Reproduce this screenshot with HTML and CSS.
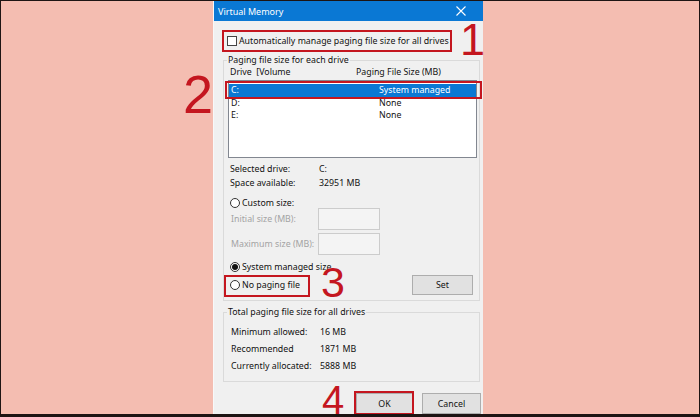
FILE: index.html
```html
<!DOCTYPE html>
<html>
<head>
<meta charset="utf-8">
<link rel="stylesheet" href="styles.css">
</head>
<body>
<div class="frame">
  <div class="dialog">
    <div class="titlebar">
      <span class="title">Virtual Memory</span>
      <svg class="close" width="10" height="10" viewBox="0 0 10 10"><path d="M0.5 0.5 L9.5 9.5 M9.5 0.5 L0.5 9.5" stroke="#fff" stroke-width="1.1" fill="none"/></svg>
    </div>
    <div class="auto-row">
      <span class="checkbox"></span>
      <span>Automatically manage paging file size for all drives</span>
    </div>
    <div class="group group1">
      <div class="legend">Paging file size for each drive</div>
      <div class="list-head">
        <span class="col1">Drive&nbsp; [Volume</span>
        <span>Paging File Size (MB)</span>
      </div>
      <div class="list">
        <div class="list-row selected"><span class="lcol1">C:</span><span>System managed</span></div>
        <div class="list-row"><span class="lcol1">D:</span><span>None</span></div>
        <div class="list-row"><span class="lcol1">E:</span><span>None</span></div>
      </div>
      <div class="info">
        <div class="info-row"><span class="ilabel">Selected drive:</span><span>C:</span></div>
        <div class="info-row"><span class="ilabel">Space available:</span><span>32951 MB</span></div>
      </div>
      <div class="radio-row custom"><span class="radio"></span><span>Custom size:</span></div>
      <div class="field-row first"><span class="flabel">Initial size (MB):</span><span class="input"></span></div>
      <div class="field-row"><span class="flabel">Maximum size (MB):</span><span class="input"></span></div>
      <div class="radio-row sysman"><span class="radio checked"></span><span>System managed size</span></div>
      <div class="radio-row nopage">
        <span class="radio"></span><span>No paging file</span>
        <span class="btn set">Set</span>
      </div>
    </div>
    <div class="group group2">
      <div class="legend">Total paging file size for all drives</div>
      <div class="totals">
        <div class="total-row"><span class="tlabel">Minimum allowed:</span><span>16 MB</span></div>
        <div class="total-row"><span class="tlabel">Recommended</span><span>1871 MB</span></div>
        <div class="total-row"><span class="tlabel">Currently allocated:</span><span>5888 MB</span></div>
      </div>
    </div>
    <div class="buttons">
      <span class="btn ok">OK</span>
      <span class="btn cancel">Cancel</span>
    </div>
  </div>

  <div class="mark box-auto"></div>
  <div class="mark box-c"></div>
  <div class="mark box-nopage"></div>
  <div class="mark box-ok"></div>
  <span class="num n1">1</span>
  <span class="num n2">2</span>
  <span class="num n3">3</span>
  <span class="num n4">4</span>
</div>
</body>
</html>
```

FILE: styles.css
```css
html, body {
  margin: 0;
  padding: 0;
}
body {
  background: #1d1413;
  width: 700px;
  height: 417px;
  overflow: hidden;
  font-family: "Noto Sans", "Open Sans", sans-serif;
  font-size: 8.8px;
  color: #111;
}
.frame {
  position: relative;
  margin: 1px 1px 3px 1px;
  height: 413px;
  background: #f4bdb1;
  display: flex;
  padding-left: 212px;
  overflow: hidden;
}
.dialog {
  width: 270px;
  height: 413px;
  background: #f0f0f0;
  display: flex;
  flex-direction: column;
  border-left: 1px solid #f8f8f8;
  box-sizing: border-box;
}
.titlebar {
  height: 20px;
  flex: none;
  background: #0a78d4;
  color: #fff;
  display: flex;
  align-items: center;
  justify-content: space-between;
  padding: 0 17px 0 4px;
  font-size: 9px;
}
.close {
  display: block;
}
.auto-row {
  margin-top: 13px;
  height: 14px;
  padding-left: 13px;
  display: flex;
  align-items: center;
  gap: 2px;
  white-space: nowrap;
}
.checkbox {
  width: 8px;
  height: 8px;
  border: 1px solid #444;
  background: #fff;
  flex: none;
}
.group {
  margin-left: 9px;
  width: 257px;
  border: 1px solid #dadada;
  box-sizing: border-box;
}
.group1 {
  margin-top: 12px;
  padding-bottom: 5px;
}
.legend {
  margin-top: -7px;
  margin-left: 3px;
  padding: 0 1px;
  width: fit-content;
  background: #f0f0f0;
  line-height: 12px;
  height: 12px;
  white-space: nowrap;
}
.list-head {
  height: 12px;
  line-height: 12px;
  padding-left: 6px;
  display: flex;
  white-space: nowrap;
}
.col1 {
  width: 126px;
}
.list {
  margin-top: 2px;
  margin-left: 4px;
  width: 249px;
  height: 78px;
  border: 1px solid #828790;
  background: #fff;
  box-sizing: border-box;
  padding-top: 3px;
}
.list-row {
  height: 12.5px;
  line-height: 12.5px;
  padding-left: 2px;
  display: flex;
  white-space: nowrap;
}
.list-row.selected {
  background: #0a78d4;
  color: #fff;
}
.lcol1 {
  width: 148px;
}
.info {
  margin-top: 4px;
  padding-left: 6px;
}
.info-row {
  height: 14px;
  line-height: 14px;
  display: flex;
  white-space: nowrap;
}
.ilabel {
  width: 89px;
}
.radio-row {
  display: flex;
  align-items: center;
  gap: 2px;
  padding-left: 6px;
  white-space: nowrap;
}
.radio {
  width: 8px;
  height: 8px;
  border: 1px solid #333;
  border-radius: 50%;
  background: #fff;
  flex: none;
  display: flex;
  align-items: center;
  justify-content: center;
}
.radio.checked::after {
  content: "";
  width: 6px;
  height: 6px;
  border-radius: 50%;
  background: #111;
}
.custom {
  margin-top: 8px;
  height: 10px;
}
.field-row {
  height: 22px;
  display: flex;
  align-items: center;
  padding-left: 7px;
  color: #a3a3a3;
  white-space: nowrap;
  margin-top: 3px;
}
.field-row.first {
  margin-top: 0;
}
.flabel {
  width: 87px;
}
.input {
  width: 62px;
  height: 22px;
  border: 1px solid #cccccc;
  background: #f4f4f4;
  box-sizing: border-box;
}
.sysman {
  margin-top: 6px;
  height: 12px;
}
.nopage {
  margin-top: 2px;
  height: 20px;
  padding-right: 6px;
}
.btn {
  display: flex;
  align-items: center;
  justify-content: center;
  background: #e1e1e1;
  border: 1px solid #adadad;
  box-sizing: border-box;
  color: #111;
}
.set {
  margin-left: auto;
  width: 61px;
  height: 20px;
}
.group2 {
  margin-top: 11px;
  padding-bottom: 6px;
}
.totals {
  margin-top: 6px;
  padding-left: 7px;
}
.total-row {
  height: 17px;
  line-height: 17px;
  display: flex;
  white-space: nowrap;
}
.tlabel {
  width: 89px;
}
.buttons {
  margin-top: 11px;
  height: 21px;
  display: flex;
  justify-content: flex-end;
  gap: 9px;
  padding-right: 2px;
}
.ok {
  width: 57px;
  height: 21px;
}
.cancel {
  width: 59px;
  height: 21px;
}
.mark {
  position: absolute;
  border: 2px solid #c4161f;
  box-sizing: border-box;
}
.box-auto {
  left: 221px;
  top: 29px;
  width: 230px;
  height: 22px;
}
.box-c {
  left: 224px;
  top: 80px;
  width: 257px;
  height: 18px;
}
.box-nopage {
  left: 223px;
  top: 274px;
  width: 86px;
  height: 22px;
}
.box-ok {
  left: 353px;
  top: 390px;
  width: 60px;
  height: 24px;
}
.num {
  position: absolute;
  font-family: "Liberation Sans", Arial, sans-serif;
  line-height: 1;
  color: #c4161f;
}
.n1 {
  left: 459px;
  top: 16px;
  font-size: 45px;
}
.n2 {
  left: 182px;
  top: 66px;
  font-size: 54px;
}
.n3 {
  left: 320px;
  top: 260px;
  font-size: 43px;
}
.n4 {
  left: 321px;
  top: 385px;
  font-size: 40px;
  line-height: 0.7;
}
```
